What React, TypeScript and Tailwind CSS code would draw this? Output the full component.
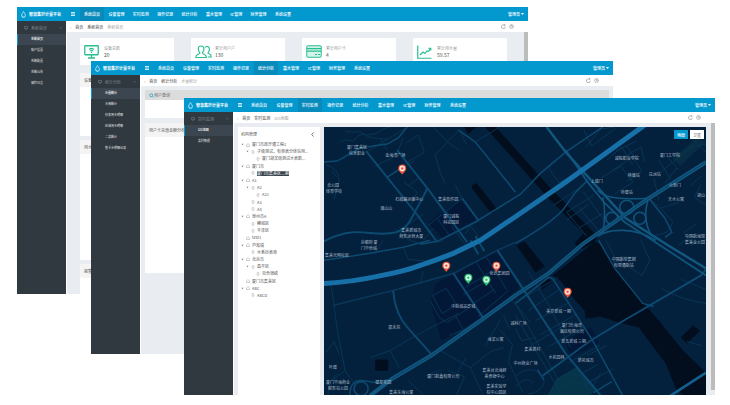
import type { ReactNode } from "react";
import clsx from "clsx";

const MENU = [
  "系统首页",
  "设备管理",
  "实时监测",
  "操作记录",
  "统计分析",
  "重水管理",
  "IC管理",
  "财务管理",
  "系统设置",
];

type WindowProps = {
  className: string;
  navClass: string;
  activeMenu: string;
  group: string;
  items: string[];
  scrollbar?: boolean;
  children: ReactNode;
};

const DropIcon = () => (
  <svg viewBox="0 0 10 14" className="h-[7px] w-[5px] shrink-0">
    <path
      d="M5 1.2C3.4 4 1.2 6.2 1.2 9a3.8 3.8 0 0 0 7.6 0C8.800 6.200 6.600 4 5 1.200Z"
      fill="none"
      stroke="#e6f6fc"
      strokeWidth="1.500"
    />
    <path d="M3 9.500a2 2 0 0 0 2 1.800" fill="none" stroke="#e6f6fc" />
  </svg>
);

const AppWindow = ({
  className,
  navClass,
  activeMenu,
  group,
  items,
  scrollbar,
  children,
}: WindowProps) => (
  <section
    className={clsx("absolute flex flex-col overflow-hidden bg-white", className)}
  >
    <header className="flex h-[14px] shrink-0 items-center bg-[#0399cf] pr-[4px] pl-[4px] text-[4px] text-white">
      <DropIcon />
      <h2 className="ml-[3px] w-[34px] font-bold">智慧集抄计量平台</h2>
      <button className="ml-[8px] flex w-[4px]" aria-label="menu">
        <svg viewBox="0 0 8 8" className="h-[4px] w-[4px]">
          <path d="M0 1h8M0 4h8M0 7h8" stroke="#fff" strokeWidth="1.600" />
        </svg>
      </button>
      <nav
        className={clsx(
          "ml-[5px] flex shrink-0 justify-between self-stretch",
          navClass
        )}
      >
        {MENU.map((item) => (
          <a
            key={item}
            href="#"
            className={clsx(
              "flex items-center px-[4px] font-medium",
              item === activeMenu && "bg-[#088abb] font-bold"
            )}
          >
            {item}
          </a>
        ))}
      </nav>
      <button className="ml-auto flex items-center font-medium">
        管理员
        <svg viewBox="0 0 6 4" className="ml-px h-[2px] w-[3px]">
          <path d="M0 0h6L3 4Z" fill="#fff" />
        </svg>
      </button>
    </header>

    <div className="flex min-h-0 grow">
      <aside className="w-[49px] shrink-0 bg-[#303840] text-[#d3d7da]">
        <div className="flex h-[13px] items-center pr-[4px] pl-[7px] text-[4px] text-[#7d868e]">
          <svg viewBox="0 0 8 8" className="mr-[3px] h-[4px] w-[4px]">
            <path
              d="M1 1h6v4H1zM2.500 7h3"
              fill="none"
              stroke="#7d868e"
            />
          </svg>
          {group}
          <svg viewBox="0 0 8 6" className="ml-auto h-[2px] w-[3px]">
            <path d="m1 1 3 3 3-3" fill="none" stroke="#8c949b" strokeWidth="1.500" />
          </svg>
        </div>
        <ul className="text-[3px]">
          {items.map((item, i) => (
            <li key={item}>
              <a
                href="#"
                className={clsx(
                  "flex h-[11px] items-center border-l pl-[13px] font-medium",
                  i === 0
                    ? "border-[#0399cf] bg-[#3c4651] text-white"
                    : "border-transparent"
                )}
              >
                {item}
              </a>
            </li>
          ))}
        </ul>
      </aside>

      <div className="ml-px flex min-w-0 grow flex-col">
        <div className="flex h-[11px] shrink-0 items-center gap-[4px] pr-[14px] pl-[3px] text-[4px] text-[#444]">
          <span className="text-[#999]">‹</span>
          <span>首页</span>
          <span>{group}</span>
          <span className="text-[#a5a5a5]">{items[0]}</span>
          <svg viewBox="0 0 26 10" className="ml-auto h-[5px] w-[13px]">
            <g fill="none" stroke="#888" strokeWidth="1.200">
              <path d="M8.500 5.500A3.800 3.800 0 1 1 6.500 2M6 .5l2.500 1.500L6 4" />
              <circle cx="21" cy="5" r="3.800" />
              <path d="M21 2.500V5h2.500" />
            </g>
          </svg>
        </div>
        <div className="flex min-h-0 grow bg-[#e9edf2]">
          <div className="flex min-w-0 grow flex-col">{children}</div>
          {scrollbar && (
            <div className="mb-[5px] ml-[5px] w-[4px] shrink-0 bg-[#bcbcbc]" />
          )}
        </div>
      </div>
    </div>
  </section>
);

const MonitorIcon = () => (
  <svg viewBox="0 0 30 28" className="h-[14px] w-[15px]">
    <g fill="none" stroke="#27bf90" strokeWidth="2.600">
      <rect x="1.500" y="1.500" width="27" height="18" rx="1.500" />
      <path d="M8 26h14M15 20v6M10.500 9a6.500 6.500 0 0 1 9 0M12.500 12a3.500 3.500 0 0 1 5 0" />
    </g>
    <circle cx="15" cy="14.500" r="1.500" fill="#27bf90" />
  </svg>
);

const UsersIcon = () => (
  <svg viewBox="0 0 34 28" className="h-[14px] w-[17px]">
    <g fill="none" stroke="#27bf90" strokeWidth="2.200">
      <path d="M12 2c-3.500 0-5.500 2.500-5.500 6s1.500 5.500 3 7c1 2-1 2.500-4 4C2.500 20.500 1.500 22 1.500 25H23c0-3-1-4.500-4-6s-5-2-4-4c1.500-1.500 3-3.500 3-7s-2-6-6-6Z" />
      <path d="M20 5c1-1.500 2.500-2 4-2 3 0 5 2 5 5.500 0 3-1.500 4.500-2.500 6-1 2 .5 2.500 3 3.500 2.500 1.200 3 3 3 6H26" />
    </g>
  </svg>
);

const CardIcon = () => (
  <svg viewBox="0 0 32 26" className="h-[13px] w-[16px]">
    <rect x="1.500" y="1.500" width="29" height="23" rx="2" fill="#d5f3ea" stroke="#27bf90" strokeWidth="2" />
    <path d="M2 7h28M2 12h28" stroke="#27bf90" strokeWidth="2.500" />
    <path d="M18 19h4M24 19h4" stroke="#27bf90" strokeWidth="2" />
  </svg>
);

const ChartIcon = () => (
  <svg viewBox="0 0 30 28" className="h-[14px] w-[15px]">
    <g fill="none" stroke="#27bf90" strokeWidth="2.400">
      <path d="M1.500 1v25.500H29" />
      <path d="m6 20 6-6 4 3 4-5 3 1 4-6M22.500 6.500H27.500V11" />
    </g>
  </svg>
);

const STATS = [
  { label: "设备总数", value: "20", icon: <MonitorIcon /> },
  { label: "累计用户户", value: "130", icon: <UsersIcon /> },
  { label: "累计用户卡", value: "4", icon: <CardIcon /> },
  { label: "累计用水量", value: "59.57", icon: <ChartIcon /> },
];

const Panel = ({
  title,
  className,
}: {
  title: string;
  className: string;
}) => (
  <div className={clsx("shrink-0 bg-white", className)}>
    <h3 className="flex h-[14px] items-center bg-[#f4f4f4] pl-[4px] text-[4px] text-[#555]">
      {title}
    </h3>
  </div>
);

const HomePage = () => (
  <div className="flex min-h-0 grow flex-col overflow-hidden pt-[6px] pr-[12px] pl-[13px]">
    <div className="grid h-[27px] shrink-0 grid-cols-4 gap-[17px]">
      {STATS.map((s) => (
        <div key={s.label} className="flex items-center bg-white pl-[4px]">
          <div className="w-[20px]">{s.icon}</div>
          <dl>
            <dt className="text-[4px] leading-[6px] text-[#999]">{s.label}</dt>
            <dd className="text-[5px] leading-[8px] text-[#555]">{s.value}</dd>
          </dl>
        </div>
      ))}
    </div>
    <Panel title="设备统计" className="mt-[8px] h-[63px]" />
    <Panel title="用水统计" className="mt-[4px] h-[120px]" />
    <Panel title="报警统计" className="mt-[4px] h-[120px]" />
  </div>
);

const StatsPage = () => (
  <div className="flex grow flex-col px-[4px] pt-[4px]">
    <div className="h-[28px] bg-white">
      <h3 className="flex h-[10px] items-center bg-[#dcdcdc] pl-[4px] text-[4px] text-[#666]">
        <svg viewBox="0 0 10 10" className="h-[5px] w-[5px]">
          <circle cx="4.500" cy="4.500" r="3" fill="none" stroke="#1b9fd6" strokeWidth="1.500" />
          <path d="m7 7 2.500 2.500" stroke="#1b9fd6" strokeWidth="1.500" />
        </svg>
        用户查询
      </h3>
    </div>
    <Panel title="用户卡充值金额分布" className="mt-[5px] h-[150px]" />
  </div>
);

type Node = { text: string; level: number; open?: boolean; selected?: boolean };

const TREE: Node[] = [
  { text: "厦门市政开通工程1", level: 0, open: true },
  { text: "子级测试，有单表分体信用...", level: 1, open: true },
  { text: "厦门湖滨南测试水表数...", level: 2 },
  { text: "厦门市", level: 0, open: true },
  { text: "厦门市集美区二期", level: 1, selected: true },
  { text: "A1", level: 0, open: true },
  { text: "A2", level: 1, open: true },
  { text: "A21", level: 2 },
  { text: "A3", level: 1 },
  { text: "A4", level: 1 },
  { text: "泉州市A", level: 0, open: true },
  { text: "鲤城区", level: 1 },
  { text: "丰泽区", level: 1 },
  { text: "test1", level: 0 },
  { text: "芦淞镇", level: 0, open: true },
  { text: "水系抄表单", level: 1 },
  { text: "北京市", level: 0, open: true },
  { text: "昌平区", level: 1, open: true },
  { text: "百合锦绣", level: 2 },
  { text: "厦门市集美区", level: 0 },
  { text: "ABC", level: 0, open: true },
  { text: "ABCD", level: 1 },
];

const INDENT = ["pl-[3px]", "pl-[8px]", "pl-[13px]"];

const TreePanel = () => (
  <div className="w-[82px] shrink-0 bg-white text-[4px] text-[#555]">
    <div className="flex h-[14px] items-center justify-between pr-[6px] pl-[3px]">
      <h3>机构管理</h3>
      <svg viewBox="0 0 6 10" className="h-[5px] w-[3px]">
        <path d="M5 1 1.500 5 5 9" fill="none" stroke="#333" strokeWidth="1.400" />
      </svg>
    </div>
    <ul className="grid h-[158px] auto-rows-fr">
      {TREE.map((node) => (
        <li
          key={node.text + node.level}
          className={clsx("flex items-center", INDENT[node.level])}
        >
          <svg viewBox="0 0 6 6" className="mr-[2px] h-[3px] w-[3px] shrink-0">
            {node.open && <path d="M1 1.500h4L3 4.500Z" fill="#777" />}
          </svg>
          <svg viewBox="0 0 8 8" className="mr-[2px] h-[4px] w-[4px] shrink-0">
            {node.level === 0 ? (
              <path d="M1 4 4 1l3 3v3H1Z" fill="none" stroke="#999" />
            ) : (
              <path
                d="M4 7.500C2.500 5.500 2 4.500 2 3a2 2 0 0 1 4 0c0 1.500-.5 2.500-2 4.500Z"
                fill="none"
                stroke="#999"
              />
            )}
          </svg>
          <span
            className={clsx(
              "whitespace-nowrap leading-[5px]",
              node.selected && "bg-[#39424c] text-white"
            )}
          >
            {node.text}
          </span>
        </li>
      ))}
    </ul>
  </div>
);

const PINS = [
  { x: 402, y: 169, color: "#e8533a", soft: "#fde3d8" },
  { x: 446, y: 266, color: "#e8533a", soft: "#fde3d8" },
  { x: 496, y: 266, color: "#e8533a", soft: "#fde3d8" },
  { x: 567, y: 292, color: "#e8533a", soft: "#fde3d8" },
  { x: 468, y: 278, color: "#2fbf74", soft: "#d5f8e3" },
  { x: 486, y: 280, color: "#2fbf74", soft: "#d5f8e3" },
];

// [x, y, text], stacked names are two entries
const LABELS: [number, number, string][] = [
  [357, 149, "厦门集美区"],
  [357, 155, "信息职业"],
  [395, 157, "金海湾广场"],
  [333, 187, "北公园"],
  [334, 193, "体育学校"],
  [409, 201, "石鼓路运输中心"],
  [448, 201, "集美软件园"],
  [386, 210, "涌山山"],
  [451, 218, "厦门诚毅"],
  [451, 224, "科技园区"],
  [411, 232, "集美新城市"],
  [411, 238, "商务运营大厦"],
  [369, 244, "京都府 厦"],
  [369, 250, "门华侨城"],
  [337, 257, "集美光明社区"],
  [626, 160, "诚毅职业学院"],
  [669, 157, "厦门工学院"],
  [633, 177, "林墩站"],
  [654, 176, "兑洲站"],
  [596, 183, "上塘门"],
  [674, 187, "火炬门"],
  [626, 194, "孙厝站"],
  [675, 201, "天水公寓"],
  [700, 197, "湖山"],
  [694, 238, "中国航海馆"],
  [694, 244, "集美业公园"],
  [623, 261, "中国航空集团"],
  [623, 267, "有限通航站"],
  [499, 275, "化讯集团园"],
  [463, 308, "中航城品影城"],
  [394, 328, "嘉禾苑"],
  [495, 340, "海滨公寓"],
  [518, 324, "诚科广场"],
  [558, 313, "美岁新城 一期"],
  [571, 326, "厦门乐海湾"],
  [571, 332, "酒店有限公司"],
  [573, 342, "新五新城 三期"],
  [532, 350, "集美新村"],
  [556, 358, "水花园林"],
  [585, 361, "新花城市"],
  [525, 364, "中州商业广场"],
  [333, 368, "叶厝"],
  [443, 377, "厦门航鑫有限公司"],
  [494, 371, "集美台北海鲜"],
  [494, 377, "美食街中心"],
  [496, 387, "集美实验学"],
  [496, 393, "校中心园区"],
  [383, 383, "建发花园"],
  [338, 383, "厦门华海商业"],
  [338, 389, "服务站公园"],
  [401, 393, "集美东海公寓"],
];

const CityMap = () => (
  <svg
    viewBox="324 127 381 268"
    preserveAspectRatio="xMinYMin slice"
    className="block h-full w-full"
  >
    <rect x="324" y="127" width="900" height="400" fill="#03203d" />

    {/* darker blocks and parks */}
    <path d="M428 222 461 199 477 221 444 240ZM455 274 496 251 519 287 484 316ZM436 283 453 274 482 317 441 340 430 300ZM565 340 590 327 598 342 570 356Z" fill="#031737" />
    <path d="m556 378 20-12 20 22-8 8h-42Z" fill="#063448" />
    <path d="m672 158 24-20 9 4-26 24Z" fill="#082c42" />

    {/* water */}
    <g fill="#020d1d">
      <path d="m552 275 43-34 6 4 17 27 25 31 15 17 24 30 23 22v23h-22l-8-7-10-25-27-36-20-5-18-6-15 2-1-8-11-12-13-18Z" />
      <rect x="375" y="359" width="13" height="11" rx="2" />
      <path d="m680 337 12-12 7 5-13 13ZM464 127h12l-8 7ZM516 245l8-4 20 25-9 6ZM540 284l8-6 4 3-11 8Z" />
      <path d="m584 232 10 10-14 7-6-6Z" />
    </g>
    <g fill="none" stroke="#020d1d" strokeLinecap="round">
      <path d="m490 127 25 28 33 37 44 45" strokeWidth="8" />
      <path d="m475 187 17 22" strokeWidth="7" />
    </g>

    {/* small streets */}
    <g fill="none" stroke="#0a3859" strokeWidth="0.900">
      <path d="M340 142c8-6 9 3 16-4s12-2 18-4 8-6 16-7M345 131c8 3 14-2 20 4 8 5 14 3 22 4" />
      <path d="M326 165c8 2 14 8 13 16l-5 18M337 177l-5-6M406 143l12-8 6 17-25 15M404 182l13 10-6 12M418 178l-10 8" />
      <path d="m433 127 14 15-12 13 5 18M447 142l12-12 7 14M440 173l5 10M447 142l12 8M475 142l24-15" />
      <path d="m366 152 40-24M375 166l18-9M387 177l27-16M380 138l7 12M395 158l8-20" />
      <path d="m428 225 33-26 17 22-40 21M437 218l12 17M446 211l10 17M423 240l10-12M455 185l8 16M465 234l5-9 8 12M451 226l14 18M395 228l15 13M405 226l18-12" />
      <path d="M399 227c6 6 9 14 18 15M383 240l-8 14M403 247l5 12 22 2M420 283l3-12" />
      <path d="m333 305 60-15 60-17 44-23 18-8" strokeWidth="1.600" />
      <path d="m331 283 6 45 8 42 10 14M370 357l20-7 20-12 48-25M390 350l9 17M432 295l14-7 10 16-14 9Z" />
      <path d="m430 300 9 17 8 5 22-15M455 315l8 14-14 6M463 294l25-14M470 305l24-16M478 316l30-26M465 287l28-17M476 262l19 31M486 257l20 32" />
      <path d="m440 350 30 17 13 28M457 372l8-14M448 370l16 6-8 19M408 380l16 15M425 375l16-6M470 367l20-16 13-4M500 330l12 14-4 17 14 30M485 345l15-26M503 315l6 13M512 300l18 22" />
      <path d="M328 395c0-12 5-20 10-22M326 352l8-11 5 12M345 370l-16 12M360 395l-11-8" />
      <path d="m527 270 22 36 21 41M515 303l47 84M515 315l46 79M522 298l35-21M528 310l31-21M535 320l32-17M540 334l37-21M548 346l36-20M536 337l-15 3-6-12M530 345l40-24" />
      <path d="M515 376c9-10 22-8 27 0s-4 16-14 17M515 386c7-8 16-9 17-3M555 380c10-11 27-7 37 4M561 386c8-7 19-5 26 3M575 366l13 20M582 372l15-8M568 362l31-17M600 372l-8 14M606 345l-20 10M599 375l-15 10M613 368l-30 16" />
      <path d="m548 168 10 14 26-10M553 205l30-20M566 212l20 24M578 207l22 26M583 192l19 26M566 212l27-17M588 204l-22 16M578 228l24-15" />
      <path d="m600 178 20-12 12 16-18 12M606 160l15-13 11 18M612 170l20-13 9 14-15 10M625 145l11 15M615 151l20-10M585 147l15-18 14-2M583 130l8 16 24-18M623 157l17-10 4 15" />
      <path d="m665 155 13 15M658 160l12 20M660 172l30-25 15-3M653 178l5 22M676 168l-12 15M690 185l10-9M684 132l21 20" />
      <path d="m648 198 12 10 12 14-6 10-14 4M660 208l18-6M690 235l-12 10M695 224l-12 8 8 12 14-5M700 185l-7 12 12 8M605 240l10 18 26 17 8-15-9-20M612 262l23-6" />
      <path d="M661 288c13 8 27 12 44 15M680 279l25 10M700 345l-14-4" />
    </g>

    {/* secondary roads */}
    <g fill="none" stroke="#0d4a70" strokeWidth="1.500">
      <path d="m324 162 13-1 23-13 27-4 11-6 9-11" />
      <path d="m366 151 49 61 22 30" strokeWidth="1.900" />
      <path d="m397 150 30 38 40 54" strokeWidth="1.900" />
      <path d="M427 188c-4 10-11 20-14 27-5 9-8 14-17 17-16 4-28-1-43 0-11 1-20 4-29 9" strokeWidth="1.900" />
      <path d="m387 177 14-9M458 130l17 12 40 50M462 198l16 22" />
      <path d="m420 244 17-3 41-21 42-26 20-21 25-21 37-25" />
      <path d="M515 243c18-10 35-20 47-33l13-18 12-12" />
      <path d="m324 260 46-7 33-6 27-7" />
      <path d="M393 290c1 13 4 22 9 30 9 13 19 21 30 35" strokeWidth="1.900" />
      <path d="m453 273 30 45M470 240l8 14M475 236l9 15" strokeWidth="1.900" />
      <path d="m497 250 18 27 50 76 36 43" strokeWidth="2" />
      <path d="m552 278 40 62 30 55" />
      <path d="m542 375 48-35 28-17 82-48 5-6" strokeWidth="1.900" />
      <path d="m598 240 16 28 28 35 11 3" />
      <path d="m593 392 18-11M537 369l6 10" />
      <path d="m515 303 33-26 4 1M648 198l16 20 7 14-7 5" />
      <circle cx="361" cy="388" r="7" />
      <path d="M350 395c-1-11 5-16 13-15 9 1 15 4 24-1" />
    </g>

    {/* interchange */}
    <g fill="none" stroke="#10547c" strokeWidth="1.600">
      <circle cx="626" cy="207" r="7" />
      <circle cx="611" cy="218" r="6" />
      <circle cx="639" cy="218" r="6" />
      <path d="M597 190c8 10 32 9 51 8M602 197c3 11 2 24 0 36M648 198c-4 10-5 24 2 36M597 236c11-8 37-9 58 4" />
      <path d="m565 150 22 32 17 21 20 19 32 21 49 32" strokeWidth="1.800" />
    </g>

    {/* main roads */}
    <g fill="none" stroke="#11577f">
      <path d="m546 127 19 25 27 30 33 36 42 27 38 23" strokeWidth="2.400" />
      <path d="m705 162-57 36-65 45-35 30-33 22-32 23-52 37-39 23-22 17" strokeWidth="4" />
      <path d="m705 162-57 36-65 45-35 30-33 22-32 23-52 37-39 23" stroke="#0a3a5e" strokeWidth="0.800" />
      <path d="m665 398 40-26" stroke="#14618f" strokeWidth="2.600" />
    </g>
    <path
      d="M324 283c18-1 35-3 53-7 16-3 30-6 43-11 12-4 23-8 33-12l27-13 40-27 45-31 50-36 29-21"
      fill="none"
      stroke="#1870a8"
      strokeWidth="5"
    />

    <g
      fill="#aebdca"
      fontSize="4"
      textAnchor="middle"
      className="font-['Noto_Sans_CJK_SC',sans-serif]"
    >
      {LABELS.map(([x, y, text]) => (
        <text key={`${x}-${y}`} x={x} y={y}>
          {text}
        </text>
      ))}
    </g>

    {PINS.map((p) => (
      <g key={`${p.x}-${p.y}`} transform={`translate(${p.x} ${p.y})`}>
        <path
          d="M0 5.500C-1.200 3.300-4 2-4-.700a4 4 0 0 1 8 0C4 2 1.200 3.300 0 5.500Z"
          fill={p.color}
        />
        <circle cy="-0.700" r="2.800" fill={p.soft} />
        <circle cy="-0.700" r="1.200" fill={p.color} />
      </g>
    ))}
  </svg>
);

const MapPage = () => (
  <div className="flex min-h-0 grow pt-[4px] pl-[4px]">
    <TreePanel />
    <div className="relative ml-[4px] min-w-0 grow overflow-hidden bg-[#03203d]">
      <CityMap />
      <div className="absolute top-[3px] right-[2px] flex gap-[2px] text-[4px]">
        <button className="h-[9px] w-[14px] bg-[#0399cf] font-medium text-white">
          地图
        </button>
        <button className="h-[9px] w-[14px] bg-white text-[#666]">卫星</button>
      </div>
    </div>
  </div>
);

export default function App() {
  return (
    <main className="relative min-h-screen overflow-hidden bg-white font-['Noto_Sans_CJK_SC',sans-serif] leading-none">
      <AppWindow
        className="top-[7px] right-[202px] left-[17px] h-[287px]"
        navClass="w-[215px]"
        activeMenu="系统首页"
        group="系统首页"
        items={["系统首页", "账户设置", "系统配置", "系统公告", "操作日志"]}
        scrollbar
      >
        <HomePage />
      </AppWindow>
      <AppWindow
        className="top-[61px] right-[117px] left-[91px] h-[293px]"
        navClass="w-[220px]"
        activeMenu="统计分析"
        group="统计分析"
        items={[
          "水量统计",
          "水费统计",
          "抄表用水明细",
          "区域用水明细",
          "二次统计",
          "售卡水明细记录",
        ]}
      >
        <StatsPage />
      </AppWindow>
      <AppWindow
        className="top-[98px] right-[15px] left-[184px] h-[297px]"
        navClass="w-[223px]"
        activeMenu="实时监测"
        group="实时监测"
        items={["GIS地图", "实时数据"]}
        scrollbar
      >
        <MapPage />
      </AppWindow>
    </main>
  );
}
